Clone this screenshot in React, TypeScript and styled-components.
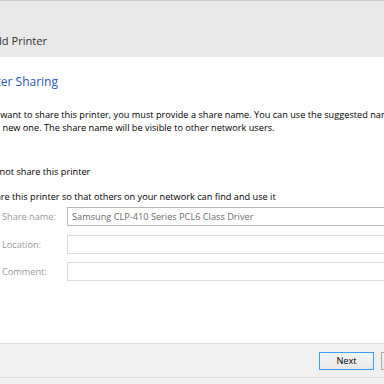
import React from "react";
import styled, { createGlobalStyle } from "styled-components";

const Global = createGlobalStyle`
  *, *::before, *::after { box-sizing: border-box; }
  html, body { margin: 0; padding: 0; width: 384px; height: 384px; overflow: hidden; background: #fff; }
  #root { width: 384px; height: 384px; overflow: hidden; }
`;

const Window = styled.div`
  margin-left: -60px;
  width: 506px;
  height: 384px;
  display: flex;
  flex-direction: column;
  font-family: "Open Sans", "Noto Sans", sans-serif;
  font-size: 9.2px;
  line-height: 13px;
  color: #000;
  background: #fff;
`;

const Header = styled.header`
  height: 57px;
  border-top: 1px solid #c8c8c8;
  background: #e9e9e9;
  padding: 32px 0 0 48px;
`;

const Title = styled.div`
  font-size: 11.1px;
  line-height: 15px;
  color: #333;
`;

const Content = styled.main`
  padding: 17px 26px 0 34px;
`;

const Heading = styled.h1`
  margin: 0;
  font-size: 12px;
  line-height: 16px;
  font-weight: 400;
  color: #2658b2;
`;

const Para = styled.p`
  margin: 18px 0 0;
  white-space: nowrap;
`;

const RadioRow = styled.label<{ $gap: number }>`
  display: flex;
  align-items: center;
  gap: 3px;
  margin-top: ${(p) => p.$gap}px;
`;

const RadioDot = styled.span<{ $on?: boolean }>`
  width: 8px;
  height: 8px;
  border-radius: 50%;
  border: 1px solid #777;
  background: #fff;
  display: inline-flex;
  align-items: center;
  justify-content: center;
  &::after {
    content: "";
    width: 4px;
    height: 4px;
    border-radius: 50%;
    background: ${(p) => (p.$on ? "#333" : "transparent")};
  }
`;

const Fields = styled.div`
  margin-top: 4px;
  padding-left: 28px;
  display: grid;
  grid-template-columns: 65px 1fr;
  row-gap: 8.5px;
  align-items: center;
`;

const FieldLabel = styled.span`
  color: #9a9a9a;
  white-space: nowrap;
`;

const TextBox = styled.input<{ $strong?: boolean }>`
  height: 19px;
  width: 100%;
  margin: 0;
  border: 1px solid ${(p) => (p.$strong ? "#b8b8b8" : "#dadada")};
  background: #fff;
  padding: 0 4px;
  font-family: inherit;
  font-size: 9.2px;
  color: #6d6d6d;
  outline: none;
`;

const Footer = styled.footer`
  margin-top: auto;
`;

const ButtonBar = styled.div`
  height: 35px;
  border-top: 1px solid #dfdfdf;
  border-bottom: 1px solid #dadada;
  background: #f0f0f0;
  padding: 8px 10px 0 0;
  display: flex;
  justify-content: flex-end;
  align-items: flex-start;
  gap: 7px;
`;

const BottomStrip = styled.div`
  height: 6px;
  background: #f1f1f1;
`;

const Button = styled.button<{ $default?: boolean }>`
  width: 55px;
  height: 18px;
  margin: 0;
  padding: 0;
  border: 1px solid ${(p) => (p.$default ? "#3d9cf5" : "#acacac")};
  background: linear-gradient(#f5f5f5, #e8e8e8);
  font-family: inherit;
  font-size: 9.2px;
  line-height: 16px;
  color: #000;
`;

export default function App() {
  return (
    <>
      <Global />
      <Window>
        <Header>
          <Title>Add Printer</Title>
        </Header>
        <Content>
          <Heading>Printer Sharing</Heading>
          <Para>
            If you want to share this printer, you must provide a share name. You can use the suggested name or
            <br />
            type a new one. The share name will be visible to other network users.
          </Para>
          <RadioRow $gap={31}>
            <RadioDot />
            Do not share this printer
          </RadioRow>
          <RadioRow $gap={12}>
            <RadioDot $on />
            Share this printer so that others on your network can find and use it
          </RadioRow>
          <Fields>
            <FieldLabel>Share name:</FieldLabel>
            <TextBox $strong readOnly value="Samsung CLP-410 Series PCL6 Class Driver" />
            <FieldLabel>Location:</FieldLabel>
            <TextBox readOnly value="" />
            <FieldLabel>Comment:</FieldLabel>
            <TextBox readOnly value="" />
          </Fields>
        </Content>
        <Footer>
          <ButtonBar>
            <Button $default>Next</Button>
            <Button>Cancel</Button>
          </ButtonBar>
          <BottomStrip />
        </Footer>
      </Window>
    </>
  );
}
